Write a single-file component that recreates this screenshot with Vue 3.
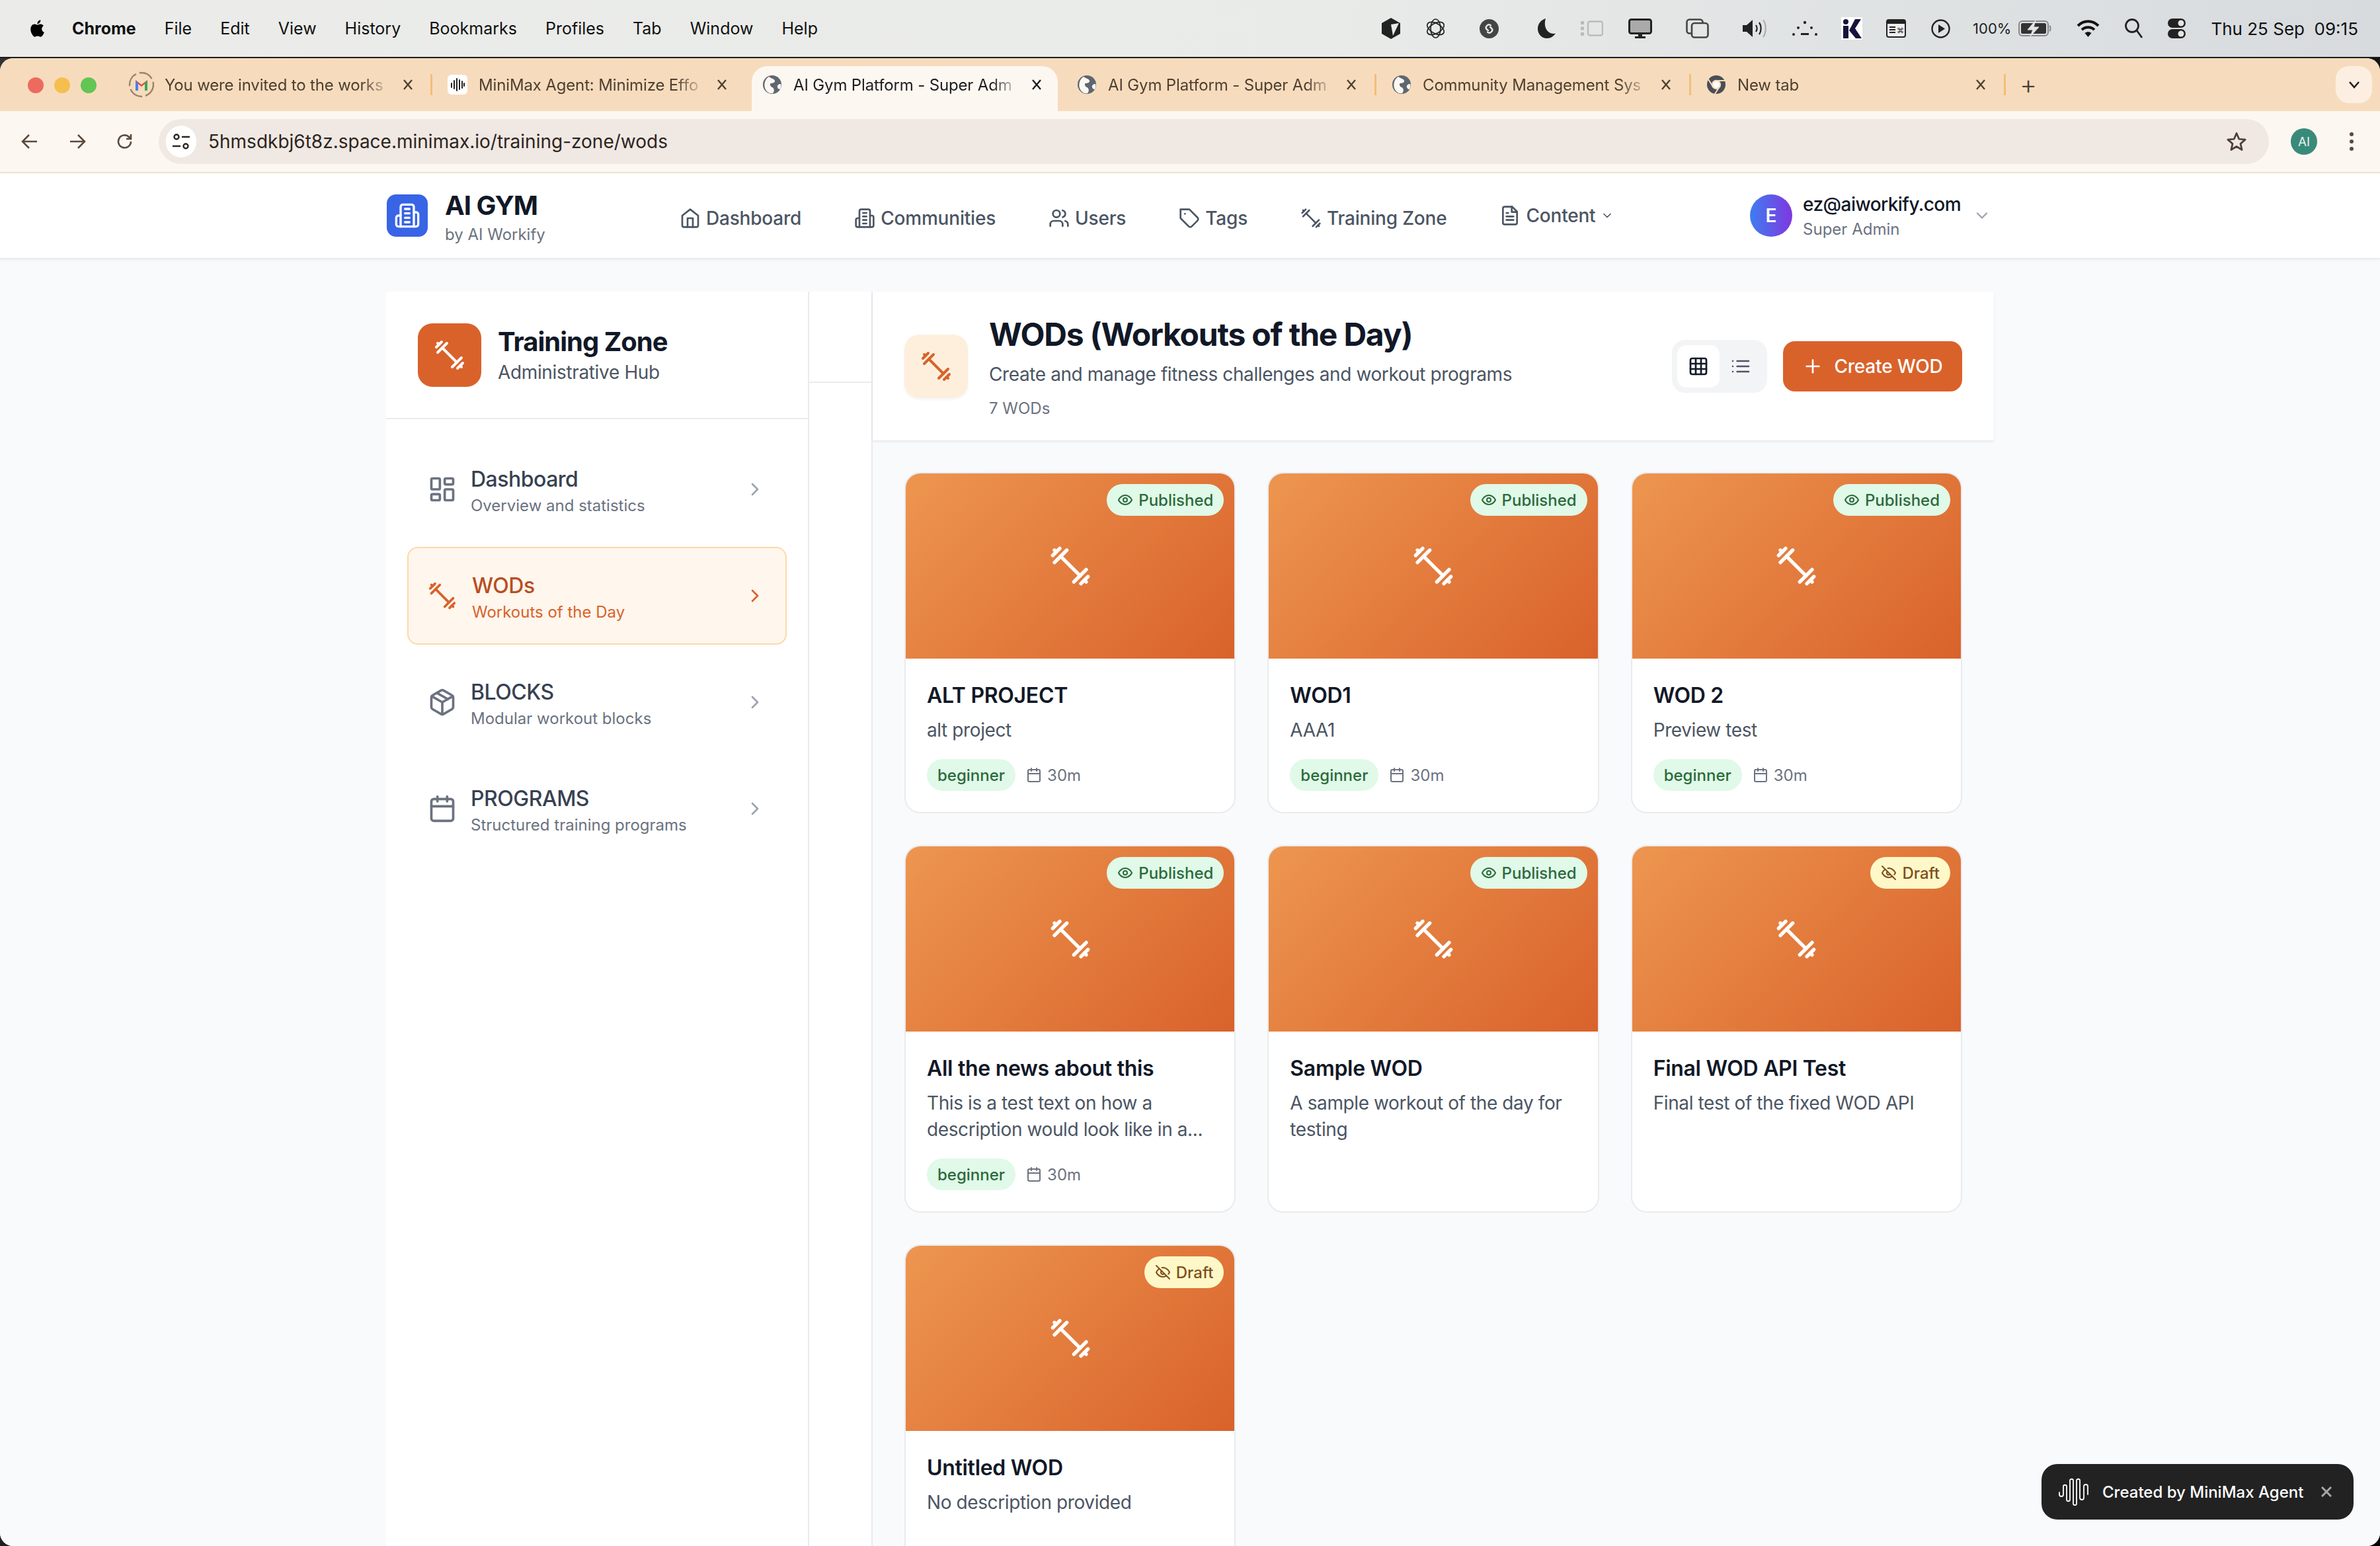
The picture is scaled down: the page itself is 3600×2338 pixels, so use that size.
<template>
  <div class="stage">
    <div class="menubar">
      <svg class="apple" viewBox="0 0 24 28"><path d="M19.6 14.8c0-3 2.4-4.4 2.5-4.5-1.4-2-3.5-2.3-4.2-2.3-1.8-.2-3.5 1-4.4 1-.9 0-2.3-1-3.8-1-2 0-3.8 1.100-4.800 2.900-2 3.600-.5 8.900 1.500 11.800 1 1.400 2.200 3 3.700 3 1.500-.1 2-1 3.800-1 1.800 0 2.300 1 3.800 1 1.600 0 2.600-1.400 3.600-2.900 1.100-1.600 1.600-3.200 1.600-3.300-.1 0-3.300-1.200-3.300-4.700zM16.700 5.900c.8-1 1.300-2.300 1.200-3.700-1.100.1-2.600.8-3.400 1.800-.7.9-1.400 2.300-1.200 3.600 1.300.1 2.600-.7 3.400-1.700z" fill="#000" /></svg>
      <span class="app-name">Chrome</span>
      <span v-for="m in menus" :key="m">{{ m }}</span>
      <div class="status">
        <svg class="st" width="28" height="32" viewBox="0 0 28 32"><path d="M14 0 28 8v16l-14 8-14-8V8z" fill="#222" /><path d="M14 10 26 8 17 27z" fill="#e8e9e8" /></svg>
        <svg class="st" width="31" height="32" viewBox="0 0 31 32" fill="none" stroke="#222" stroke-width="1.700"><ellipse cx="15.500" cy="16" rx="7.500" ry="14" /><ellipse cx="15.500" cy="16" rx="7.500" ry="14" transform="rotate(60 15.500 16)" /><ellipse cx="15.500" cy="16" rx="7.500" ry="14" transform="rotate(120 15.500 16)" /></svg>
        <svg class="st st-wide" width="29" height="29" viewBox="0 0 29 29"><circle cx="14.500" cy="14.500" r="14.500" fill="#444" /><path d="M17 9.500c-2-2-4.500-1-6 .5-2 2-1.500 4 0 5.500l2 1.500M12 19.500c2 2 4.500 1 6-.5 2-2 1.500-4 0-5.500l-2-1.500" fill="none" stroke="#e8e9e8" stroke-width="2.400" stroke-linecap="round" /></svg>
        <svg class="st st-wider" width="27" height="30" viewBox="0 0 27 30"><path d="M12 0C5 2 0 8 0 15.500 0 24 6.500 30 14 30c5.500 0 10-3 13-7.500C17 25 7.500 15 12 0z" fill="#222" /></svg>
        <svg class="st" width="34" height="24" viewBox="0 0 34 24"><rect x="11" y="1.500" width="22" height="21" rx="3" fill="none" stroke="#bbb" stroke-width="2.400" /><rect y="1" width="5" height="5" fill="#bbb" /><rect y="9.500" width="5" height="5" fill="#bbb" /><rect y="18" width="5" height="5" fill="#bbb" /></svg>
        <svg class="st" width="36" height="30" viewBox="0 0 36 30"><rect x="1.500" y="1.500" width="33" height="21" rx="3" fill="#aaa" stroke="#222" stroke-width="3" /><path d="M15 24h6v3h5v3H10v-3h5z" fill="#222" /></svg>
        <svg class="st st-wide" width="35" height="30" viewBox="0 0 35 30" fill="none" stroke="#444" stroke-width="2.600"><rect x="1.500" y="1.500" width="24" height="21" rx="4" /><rect x="9" y="7" width="24.500" height="21.500" rx="4" fill="#e4e6e6" /></svg>
        <svg class="st st-wide" width="39" height="30" viewBox="0 0 39 30"><path d="M0 10h6l9-8v26l-9-8H0z" fill="#222" /><path d="M20 10c2 3 2 7 0 10M25 6c3.500 5 3.500 13 0 18" fill="none" stroke="#222" stroke-width="2.200" /><path d="M31 2c5 7 5 19 0 26" fill="none" stroke="#aaa" stroke-width="2" /></svg>
        <svg class="st st-tight" width="38" height="24" viewBox="0 0 38 24" fill="#222"><circle cx="19" cy="3" r="2.200" /><circle cx="9" cy="11" r="2" /><circle cx="29" cy="11" r="2" /><circle cx="2" cy="21" r="2" /><circle cx="36" cy="21" r="2" /><rect x="13" y="19" width="12" height="3" /></svg>
        <svg class="st st-tight" width="32" height="34" viewBox="0 0 32 34"><rect width="32" height="34" fill="#fff" /><circle cx="7" cy="7" r="4" fill="#14143c" /><path d="M3 13h8v19H3zM12 20 21 3h9l-9 14 10 15h-9z" fill="#14143c" /></svg>
        <svg class="st st-tight" width="30" height="28" viewBox="0 0 30 28"><rect x="1" y="1" width="28" height="26" rx="3" fill="#eee" stroke="#222" stroke-width="2" /><rect x="1" y="1" width="28" height="6" fill="#222" /><path d="M5 12h9M5 16h9M5 20h9" stroke="#222" stroke-width="2" /><text x="16" y="21" font-size="11" fill="#222">⌘</text></svg>
        <svg class="st" width="29" height="29" viewBox="0 0 29 29"><circle cx="14.500" cy="14.500" r="13" fill="none" stroke="#222" stroke-width="2.400" /><path d="M11 8 21 14.500 11 21z" fill="#222" /></svg>
        <span class="st pct">100%</span>
        <svg class="st st-mini" width="50" height="24" viewBox="0 0 50 24"><rect x="1" y="1" width="44" height="22" rx="5" fill="none" stroke="#888" stroke-width="2" /><rect x="4" y="4" width="38" height="16" rx="2.500" fill="#333" /><path d="M47 8c2 1 2 7 0 8" stroke="#888" stroke-width="2" fill="none" /><path d="M26 0 14 14h8l-4 10 13-14h-8z" fill="#e4e6e6" stroke="#e4e6e6" /></svg>
        <svg class="st" width="35" height="26" viewBox="0 0 35 26" fill="none" stroke="#111" stroke-width="4"><path d="M2 9c9-9 22-9 31 0M8 15c5.500-5 13.500-5 19 0" /><path d="M17.500 26l-5-6c3-2.500 7-2.500 10 0z" fill="#111" stroke="none" /></svg>
        <svg class="st" width="27" height="30" viewBox="0 0 27 30" fill="none" stroke="#222" stroke-width="2.800"><circle cx="11" cy="11" r="9.500" /><path d="M18 18l8 11" /></svg>
        <svg class="st" width="27" height="30" viewBox="0 0 27 30"><rect width="27" height="14" rx="7" fill="#222" /><circle cx="20" cy="7" r="4.500" fill="#e4e6e6" /><rect y="16" width="27" height="14" rx="7" fill="#222" /><circle cx="20" cy="23" r="4.500" fill="#e4e6e6" /></svg>
        <span class="st date">Thu 25 Sep&nbsp; 09:15</span>
      </div>
    </div>

    <div class="window">
      <div class="tabstrip">
        <div class="lights"><i class="red"></i><i class="yellow"></i><i class="green"></i></div>
        <div v-for="t in tabs" :key="t.title + t.icon" class="tab" :class="{ active: t.active, sep: t.sep }">
          <svg v-if="t.icon === 'gmail'" class="favicon gmail" viewBox="0 0 40 40">
            <circle cx="20" cy="20" r="18" fill="none" stroke="#9a8468" stroke-width="2.400" stroke-dasharray="22 5" />
            <path d="M11 29V13l9 7 9-7v16h-4V19l-5 4-5-4v10z" fill="#e2483a" />
            <path d="M11 29V14l4 3v12z" fill="#4a80e8" /><path d="M29 29V14l-4 3v12z" fill="#3aa757" />
          </svg>
          <svg v-else-if="t.icon === 'minimax'" class="favicon" viewBox="0 0 30 30">
            <rect width="30" height="30" rx="6" fill="#fff" />
            <path d="M6 13v6M10 9v12M14 6v18M18 8v14M22 10v10M25 13v4" stroke="#222" stroke-width="2" stroke-linecap="round" />
          </svg>
          <svg v-else-if="t.icon === 'chrome'" class="favicon" viewBox="0 0 30 30">
            <circle cx="15" cy="15" r="14" fill="#4a4f55" /><circle cx="15" cy="15" r="6" fill="#fff" stroke="#f6dcbd" stroke-width="2.400" />
            <path d="M15 9h13M10 18 3 7M20 18l-7 11" stroke="#f6dcbd" stroke-width="2" />
          </svg>
          <svg v-else class="favicon" viewBox="0 0 30 30">
            <circle cx="15" cy="15" r="14" fill="#5f6670" />
            <path d="M10 3c4 3 8 3 9 6s-4 4-6 4-1 5 2 6 4 6 1 9c-5 1-10-2-12-8C2 13 5 6 10 3zM28 14c-3 0-6 2-5 5s3 3 4 3c1-2 2-5 1-8z" fill="#fdf7f2" />
          </svg>
          <span class="tab-title">{{ t.title }}</span>
          <svg class="tab-x" viewBox="0 0 24 24"><path d="M6 5l12 14M18 5 6 19" fill="none" stroke="currentColor" stroke-width="2.400" /></svg>
        </div>
        <span class="plus">+</span>
        <div class="tab-menu">
          <svg width="18" height="12" viewBox="0 0 18 12"><path d="M2 2l7 8 7-8" fill="none" stroke="#222" stroke-width="2.600" /></svg>
        </div>
      </div>

      <div class="toolbar">
        <svg class="tb" viewBox="0 0 28 28"><path d="M25 14H4M13 4 3 14l10 10" fill="none" stroke="#5b4a3c" stroke-width="2.600" /></svg>
        <svg class="tb" viewBox="0 0 28 28"><path d="M3 14h21M15 4l10 10-10 10" fill="none" stroke="#5b4a3c" stroke-width="2.600" /></svg>
        <svg class="tb" viewBox="0 0 28 28"><path d="M23 14a9.500 9.500 0 1 1-3-7l3 3M23 3v7h-7" fill="none" stroke="#5b4a3c" stroke-width="2.600" /></svg>
        <div class="urlbar">
          <div class="site">
            <svg width="26" height="26" viewBox="0 0 26 26" fill="none" stroke="#2b2520" stroke-width="2.400"><circle cx="6" cy="6" r="3.500" /><path d="M14 6h12M0 20h12" /><circle cx="20" cy="20" r="3.500" /></svg>
          </div>
          <span class="url">5hmsdkbj6t8z.space.minimax.io/training-zone/wods</span>
          <svg class="star" width="30" height="30" viewBox="0 0 24 24"><path d="m12 2 3 7 7.500.700-5.700 5 1.700 7.300L12 18l-6.500 4 1.700-7.300-5.700-5L9 9z" fill="none" stroke="#4e4036" stroke-width="2.200" stroke-linejoin="round" /></svg>
        </div>
        <span class="profile">AI</span>
        <svg class="kebab" width="10" height="30" viewBox="0 0 10 30" fill="#5b4a3c"><circle cx="5" cy="4" r="3" /><circle cx="5" cy="15" r="3" /><circle cx="5" cy="26" r="3" /></svg>
      </div>

      <div class="page">
        <header class="topbar">
          <div class="container topbar-in">
            <div class="brand">
              <div class="brand-icon"><Icon name="building" class="i-40" stroke="#fff" /></div>
              <div>
                <div class="brand-name">AI GYM</div>
                <div class="brand-sub">by AI Workify</div>
              </div>
            </div>
            <nav class="mainnav">
              <a v-for="n in navLinks" :key="n.label" class="navlink">
                <Icon :name="n.icon" class="i-32" /> {{ n.label }}
              </a>
              <a class="navlink content-link">
                <Icon name="file" class="i-32" /> Content
                <Icon name="down" class="i-20" />
              </a>
            </nav>
            <div class="user">
              <div class="avatar">E</div>
              <div class="user-text">
                <div class="email">ez@aiworkify.com</div>
                <div class="role">Super Admin</div>
              </div>
              <Icon name="down" class="i-28 user-chev" />
            </div>
          </div>
        </header>

        <div class="container body">
          <aside class="sidebar">
            <div class="side-head">
              <div class="side-icon"><Icon name="barbell" class="i-48" stroke="#fff" /></div>
              <div>
                <div class="side-title">Training Zone</div>
                <div class="side-sub">Administrative Hub</div>
              </div>
            </div>
            <div class="side-list">
              <div v-for="s in sideItems" :key="s.title" class="side-item" :class="{ on: s.on }">
                <Icon :name="s.icon" class="i-44 side-ic" />
                <div class="side-text">
                  <div class="si-title">{{ s.title }}</div>
                  <div class="si-sub">{{ s.sub }}</div>
                </div>
                <Icon name="right" class="i-32 side-chev" />
              </div>
            </div>
          </aside>

          <div class="spacer"><div class="spacer-top"></div></div>

          <main class="main">
            <div class="main-head">
              <div class="mh-icon"><Icon name="barbell" class="i-48" /></div>
              <div class="mh-text">
                <h1>WODs (Workouts of the Day)</h1>
                <p class="mh-desc">Create and manage fitness challenges and workout programs</p>
                <p class="mh-count">7 WODs</p>
              </div>
              <div class="toggle">
                <span class="tg on"><Icon name="grid" class="i-32" /></span>
                <span class="tg"><Icon name="list" class="i-32" /></span>
              </div>
              <button class="create"><Icon name="plus" class="i-32" /> Create WOD</button>
            </div>

            <div class="grid">
              <article v-for="w in wods" :key="w.title" class="card">
                <div class="thumb">
                  <Icon name="barbell" class="i-64" stroke="#fff" />
                  <span class="badge" :class="{ draft: !w.published }">
                    <Icon :name="w.published ? 'eye' : 'eyeoff'" class="i-24" />
                    {{ w.published ? "Published" : "Draft" }}
                  </span>
                </div>
                <div class="card-body">
                  <h3>{{ w.title }}</h3>
                  <p class="card-desc">{{ w.desc }}</p>
                  <div v-if="w.meta" class="meta">
                    <span class="level">beginner</span>
                    <span class="time"><Icon name="calendar" class="i-24" /> 30m</span>
                  </div>
                </div>
              </article>
            </div>
          </main>
        </div>

        <div class="toast">
          <svg width="50" height="42" viewBox="0 0 50 42" fill="none" stroke="#fff" stroke-width="1.800" stroke-linecap="round">
            <path d="M1 22v3c0 4 6 4 6 0V13c0-3 5-3 5 0v20c0 3 5 3 5 0V4c0-3 5-3 5 0v35c0 3 5 3 5 0V4c0-3 5-3 5 0v26c0 4 6 4 6 0V13c0-4 6-4 6 0v12" />
          </svg>
          <span>Created by MiniMax Agent</span>
          <svg class="toast-x" width="16" height="16" viewBox="0 0 16 16"><path d="M1 1l14 14M15 1 1 15" stroke="#a8a8a8" stroke-width="3" /></svg>
        </div>
      </div>
    </div>
  </div>
</template>

<script setup>
import { h } from "vue";

// lucide-style outlines, rects and circles written as paths
const icons = {
  home: ["m3 9 9-7 9 7v11a2 2 0 0 1-2 2H5a2 2 0 0 1-2-2z", "M9 22V12h6v10"],
  building: [
    "M6 22V4a2 2 0 0 1 2-2h8a2 2 0 0 1 2 2v18Z",
    "M6 12H4a2 2 0 0 0-2 2v6a2 2 0 0 0 2 2h2",
    "M18 9h2a2 2 0 0 1 2 2v9a2 2 0 0 1-2 2h-2",
    "M10 6h4",
    "M10 10h4",
    "M10 14h4",
    "M10 18h4",
  ],
  users: [
    "M16 21v-2a4 4 0 0 0-4-4H6a4 4 0 0 0-4 4v2",
    "M9 3a4 4 0 1 0 0 8 4 4 0 0 0 0-8z",
    "M22 21v-2a4 4 0 0 0-3-3.870",
    "M16 3.130a4 4 0 0 1 0 7.750",
  ],
  tag: [
    "M12 2H2v10l9.290 9.290c.94.94 2.480.94 3.420 0l6.580-6.580c.94-.94.94-2.480 0-3.420L12 2Z",
    "M7 7h.01",
  ],
  barbell: ["m6.500 6.500 11 11", "m21 21-1-1", "m3 3 1 1", "m18 22 4-4", "m2 6 4-4", "m3 10 7-7", "m14 21 7-7"],
  file: [
    "M14.500 2H6a2 2 0 0 0-2 2v16a2 2 0 0 0 2 2h12a2 2 0 0 0 2-2V7.500L14.500 2z",
    "M14 2v6h6",
    "M16 13H8",
    "M16 17H8",
    "M10 9H8",
  ],
  down: ["m6 9 6 6 6-6"],
  right: ["m9 18 6-6-6-6"],
  dashboard: [
    "M4 3h5a1 1 0 0 1 1 1v7a1 1 0 0 1-1 1H4a1 1 0 0 1-1-1V4a1 1 0 0 1 1-1z",
    "M15 3h5a1 1 0 0 1 1 1v3a1 1 0 0 1-1 1h-5a1 1 0 0 1-1-1V4a1 1 0 0 1 1-1z",
    "M15 12h5a1 1 0 0 1 1 1v7a1 1 0 0 1-1 1h-5a1 1 0 0 1-1-1v-7a1 1 0 0 1 1-1z",
    "M4 16h5a1 1 0 0 1 1 1v3a1 1 0 0 1-1 1H4a1 1 0 0 1-1-1v-3a1 1 0 0 1 1-1z",
  ],
  box: [
    "m7.500 4.270 9 5.150",
    "M21 8a2 2 0 0 0-1-1.730l-7-4a2 2 0 0 0-2 0l-7 4A2 2 0 0 0 3 8v8a2 2 0 0 0 1 1.730l7 4a2 2 0 0 0 2 0l7-4A2 2 0 0 0 21 16Z",
    "m3.300 7 8.700 5 8.700-5",
    "M12 22V12",
  ],
  calendar: [
    "M5 4h14a2 2 0 0 1 2 2v14a2 2 0 0 1-2 2H5a2 2 0 0 1-2-2V6a2 2 0 0 1 2-2z",
    "M16 2v4",
    "M8 2v4",
    "M3 10h18",
  ],
  grid: [
    "M5 3h14a2 2 0 0 1 2 2v14a2 2 0 0 1-2 2H5a2 2 0 0 1-2-2V5a2 2 0 0 1 2-2z",
    "M3 9h18",
    "M3 15h18",
    "M9 3v18",
    "M15 3v18",
  ],
  list: ["M8 6h13", "M8 12h13", "M8 18h13", "M3 6h.01", "M3 12h.01", "M3 18h.01"],
  plus: ["M5 12h14", "M12 5v14"],
  eye: [
    "M2 12s3-7 10-7 10 7 10 7-3 7-10 7-10-7-10-7Z",
    "M12 9a3 3 0 1 0 0 6 3 3 0 0 0 0-6z",
  ],
  eyeoff: [
    "M9.880 9.880a3 3 0 1 0 4.240 4.240",
    "M10.730 5.080A10.430 10.430 0 0 1 12 5c7 0 10 7 10 7a13.160 13.160 0 0 1-1.670 2.680",
    "M6.610 6.610A13.526 13.526 0 0 0 2 12s3 7 10 7a9.740 9.740 0 0 0 5.390-1.610",
    "m2 2 20 20",
  ],
};

const Icon = (props) =>
  h(
    "svg",
    {
      viewBox: "0 0 24 24",
      fill: "none",
      stroke: props.stroke || "currentColor",
      "stroke-width": 2,
      "stroke-linecap": "round",
      "stroke-linejoin": "round",
    },
    icons[props.name].map((d) => h("path", { d }))
  );
Icon.props = ["name", "stroke"];

const menus = ["File", "Edit", "View", "History", "Bookmarks", "Profiles", "Tab", "Window", "Help"];

const tabs = [
  { title: "You were invited to the works", icon: "gmail", sep: true },
  { title: "MiniMax Agent: Minimize Effo", icon: "minimax" },
  { title: "AI Gym Platform - Super Adm", icon: "globe", active: true },
  { title: "AI Gym Platform - Super Adm", icon: "globe2", sep: true },
  { title: "Community Management Sys", icon: "globe", sep: true },
  { title: "New tab", icon: "chrome", sep: true },
];

const navLinks = [
  { label: "Dashboard", icon: "home" },
  { label: "Communities", icon: "building" },
  { label: "Users", icon: "users" },
  { label: "Tags", icon: "tag" },
  { label: "Training Zone", icon: "barbell" },
];

const sideItems = [
  { title: "Dashboard", sub: "Overview and statistics", icon: "dashboard" },
  { title: "WODs", sub: "Workouts of the Day", icon: "barbell", on: true },
  { title: "BLOCKS", sub: "Modular workout blocks", icon: "box" },
  { title: "PROGRAMS", sub: "Structured training programs", icon: "calendar" },
];

const wods = [
  { title: "ALT PROJECT", desc: "alt project", published: true, meta: true },
  { title: "WOD1", desc: "AAA1", published: true, meta: true },
  { title: "WOD 2", desc: "Preview test", published: true, meta: true },
  {
    title: "All the news about this",
    desc: "This is a test text on how a description would look like in a...",
    published: true,
    meta: true,
  },
  { title: "Sample WOD", desc: "A sample workout of the day for testing", published: true },
  { title: "Final WOD API Test", desc: "Final test of the fixed WOD API", published: false },
  { title: "Untitled WOD", desc: "No description provided", published: false },
];
</script>

<style>
html,
body {
  margin: 0;
  background: #2b3440;
}
</style>

<style scoped>
.stage {
  width: 3600px;
  height: 2338px;
  display: flex;
  flex-direction: column;
  overflow: hidden;
  font-family: Inter, "Liberation Sans", sans-serif;
  position: relative;
  background: linear-gradient(135deg, #333 0%, #000 100%);
}

/* mac menu bar */
.menubar {
  height: 86px;
  flex: none;
  border-bottom: 2px solid #1c1c1c;
  background: linear-gradient(90deg, #ebecea 0%, #e9ebe9 55%, #d7dbde 100%);
  display: flex;
  align-items: center;
  padding-left: 42px;
  gap: 43px;
  font-size: 25px;
  color: #111;
}
.apple {
  width: 26px;
  height: 32px;
  margin-right: -2px;
}
.app-name {
  font-weight: 700;
}
.status {
  margin-left: auto;
  display: flex;
  align-items: center;
  padding-right: 33px;
}
.st {
  margin-left: 38px;
  flex: none;
}
.st-wide {
  margin-left: 51px;
}
.st-wider {
  margin-left: 59px;
}
.st-tight {
  margin-left: 36px;
}
.st-mini {
  margin-left: 11px;
}
.pct {
  margin-left: 34px;
  font-size: 22px;
  color: #222;
}
.date {
  font-size: 26px;
}

.window {
  flex: 1;
  min-height: 0;
  display: flex;
  flex-direction: column;
  border-radius: 20px;
  overflow: hidden;
  background: #f9fafb;
}

/* chrome */
.tabstrip {
  height: 80px;
  flex: none;
  background: #f6dcbd;
  display: flex;
  align-items: flex-start;
  padding-top: 12px;
  box-sizing: border-box;
  padding-left: 42px;
  position: relative;
  color: #4e3f31;
}
.lights {
  width: 143px;
  flex: none;
  display: flex;
  gap: 16px;
  padding-top: 17px;
}
.lights i {
  width: 24px;
  height: 24px;
  border-radius: 50%;
}
.red {
  background: #ed6a5e;
}
.yellow {
  background: #f5bf4f;
}
.green {
  background: #62c554;
}
.tab {
  width: 476px;
  height: 68px;
  flex: none;
  box-sizing: border-box;
  padding: 0 0 12px 16px;
  display: flex;
  align-items: center;
  position: relative;
  font-size: 24px;
}
.tab.active {
  width: 463px;
  margin-right: 13px;
  background: #fdf7f2;
  border-radius: 24px 24px 0 0;
  color: #1d1d1d;
}
.tab.sep::after {
  content: "";
  position: absolute;
  right: 7px;
  top: 12px;
  width: 3px;
  height: 32px;
  background: #f4bd78;
}
.favicon {
  width: 30px;
  height: 30px;
  flex: none;
}
.gmail {
  width: 40px;
  height: 40px;
  margin: 0 -2px 0 -7px;
}
.tab-title {
  width: 332px;
  margin-left: 17px;
  flex: none;
  white-space: nowrap;
  overflow: hidden;
  letter-spacing: -0.15px;
  -webkit-mask-image: linear-gradient(90deg, #000 90%, rgba(0, 0, 0, 0.25) 100%);
  mask-image: linear-gradient(90deg, #000 90%, rgba(0, 0, 0, 0.25) 100%);
}
.tab-x {
  width: 24px;
  height: 24px;
  margin-left: 24px;
  flex: none;
}
.plus {
  font-size: 40px;
  font-weight: 300;
  line-height: 56px;
  margin-left: 14px;
}
.tab-menu {
  position: absolute;
  right: 12px;
  top: 12px;
  width: 55px;
  height: 56px;
  border-radius: 20px;
  background: #fcefe2;
  display: flex;
  align-items: center;
  justify-content: center;
}
.toolbar {
  height: 92px;
  flex: none;
  box-sizing: content-box;
  border-bottom: 2px solid #efe0d3;
  background: #fdf7f2;
  display: flex;
  align-items: center;
  padding-left: 31px;
  gap: 44px;
}
.tb {
  width: 28px;
  height: 28px;
}
.urlbar {
  width: 3192px;
  height: 68px;
  margin-left: -7px;
  flex: none;
  border-radius: 34px;
  background: #f0e8e3;
  display: flex;
  align-items: center;
  padding: 0 34px 0 11px;
  box-sizing: border-box;
}
.site {
  width: 46px;
  height: 48px;
  border-radius: 24px;
  background: #fff;
  display: flex;
  align-items: center;
  justify-content: center;
}
.url {
  margin-left: 18px;
  font-size: 28px;
  color: #2b2520;
}
.star {
  margin-left: auto;
}
.profile {
  width: 40px;
  height: 40px;
  margin-left: -11px;
  border-radius: 50%;
  background: #3a8a7a;
  color: #e4f3ee;
  font-size: 19px;
  display: flex;
  align-items: center;
  justify-content: center;
  flex: none;
}
.kebab {
  margin-left: 3px;
}

/* page */
.page {
  flex: 1;
  min-height: 0;
  position: relative;
  overflow: hidden;
  background: #f9fafb;
}
.container {
  width: 2432px;
  margin: 0 auto;
}
.topbar {
  height: 128px;
  background: #fff;
  border-bottom: 2px solid #e9ebee;
  box-shadow: 0 2px 4px rgba(0, 0, 0, 0.04);
}
.topbar-in {
  height: 100%;
  display: flex;
  align-items: center;
}
.brand {
  display: flex;
  align-items: center;
  gap: 26px;
  padding-left: 1px;
  width: 443px;
  flex: none;
}
.brand-icon {
  width: 62px;
  height: 64px;
  border-radius: 14px;
  background: #3864e6;
  display: flex;
  align-items: center;
  justify-content: center;
}
.brand-name {
  font-size: 40px;
  font-weight: 700;
  line-height: 56px;
  padding-top: 2px;
  letter-spacing: -1px;
  color: #111827;
}
.brand-sub {
  font-size: 24px;
  line-height: 32px;
  color: #6b7280;
}
.mainnav {
  display: flex;
  align-items: center;
  gap: 80px;
}
.navlink {
  display: flex;
  align-items: center;
  gap: 8px;
  font-size: 28px;
  font-weight: 500;
  letter-spacing: -0.2px;
  color: #4b5563;
  padding-top: 8px;
  white-space: nowrap;
}
.content-link {
  padding-top: 0;
  padding-bottom: 0;
}
.user {
  margin-left: auto;
  display: flex;
  align-items: center;
  padding-right: 4px;
}
.avatar {
  width: 64px;
  height: 64px;
  border-radius: 50%;
  background: linear-gradient(90deg, #3f7df0, #8037e0);
  color: #fff;
  font-size: 28px;
  font-weight: 600;
  display: flex;
  align-items: center;
  justify-content: center;
}
.user-text {
  margin-left: 16px;
}
.email {
  font-size: 28px;
  font-weight: 500;
  line-height: 40px;
  letter-spacing: -0.55px;
  color: #111827;
}
.role {
  font-size: 24px;
  line-height: 32px;
  padding-top: 2px;
  color: #6b7280;
}
.user-chev {
  color: #9ca3af;
  margin-left: 18px;
}
.i-20 {
  width: 20px;
  height: 20px;
}
.i-24 {
  width: 24px;
  height: 24px;
  flex: none;
}
.i-28 {
  width: 28px;
  height: 28px;
}
.i-32 {
  width: 32px;
  height: 32px;
  flex: none;
}
.i-40 {
  width: 40px;
  height: 40px;
}
.i-44 {
  width: 44px;
  height: 44px;
  flex: none;
}
.i-48 {
  width: 48px;
  height: 48px;
}
.i-64 {
  width: 64px;
  height: 64px;
}

.body {
  display: flex;
  align-items: stretch;
  padding-top: 49px;
  height: 2100px;
  box-sizing: border-box;
}
.sidebar {
  width: 640px;
  flex: none;
  box-sizing: border-box;
  background: #fff;
  border-right: 2px solid #e9ebee;
}
.side-head {
  height: 193px;
  box-sizing: border-box;
  border-bottom: 2px solid #e9ebee;
  display: flex;
  align-items: center;
  gap: 25px;
  padding: 0 48px;
}
.side-icon {
  width: 96px;
  height: 96px;
  border-radius: 22px;
  background: #d9622b;
  display: flex;
  align-items: center;
  justify-content: center;
}
.side-title {
  font-size: 40px;
  font-weight: 700;
  line-height: 52px;
  letter-spacing: -1px;
  color: #111827;
}
.side-sub {
  font-size: 28px;
  line-height: 40px;
  letter-spacing: -0.35px;
  color: #4b5563;
}
.side-list {
  padding: 32px;
  display: flex;
  flex-direction: column;
  gap: 13px;
}
.side-item {
  height: 148px;
  box-sizing: border-box;
  border: 2px solid transparent;
  border-radius: 16px;
  display: flex;
  align-items: center;
  padding: 0 30px 0 29px;
  color: #6b7280;
}
.side-item.on {
  background: #fff6ed;
  border-color: #fbd9aa;
  color: #d9622b;
}
.side-ic {
  margin-right: 21px;
}
.si-title {
  font-size: 32px;
  font-weight: 500;
  line-height: 48px;
  letter-spacing: -0.5px;
  color: #374151;
}
.si-sub {
  font-size: 24px;
  line-height: 32px;
  color: #6b7280;
}
.on .si-title {
  color: #b84e1f;
}
.on .si-sub {
  color: #d9622b;
}
.side-text {
  flex: 1;
  padding-top: 2px;
}
.on .side-text {
  padding-left: 2px;
}
.side-chev {
  color: #9ca3af;
}
.on .side-chev {
  color: #d9622b;
}
.spacer {
  width: 96px;
  flex: none;
  box-sizing: border-box;
  background: #fff;
  border-right: 2px solid #e9ebee;
}
.spacer-top {
  height: 136px;
  border-bottom: 2px solid #e9ebee;
}
.main {
  flex: 1;
  min-width: 0;
}
.main-head {
  height: 225px;
  box-sizing: border-box;
  padding: 0 48px;
  background: #fff;
  box-shadow: 0 2px 3px rgba(0, 0, 0, 0.08);
  display: flex;
  align-items: center;
}
.mh-icon {
  width: 96px;
  height: 96px;
  border-radius: 22px;
  background: #feefdd;
  color: #d9622b;
  box-shadow: 0 2px 4px rgba(0, 0, 0, 0.05);
  display: flex;
  align-items: center;
  justify-content: center;
}
.mh-text {
  margin-left: 32px;
  flex: 1;
}
h1 {
  margin: 0;
  font-size: 48px;
  font-weight: 700;
  line-height: 64px;
  letter-spacing: -1.2px;
  color: #111827;
}
.mh-desc {
  margin: 8px 0 0;
  font-size: 28px;
  line-height: 40px;
  letter-spacing: -0.4px;
  color: #4b5563;
}
.mh-count {
  margin: 16px 0 0;
  font-size: 24px;
  line-height: 32px;
  color: #6b7280;
}
.toggle {
  display: flex;
  padding: 8px;
  border-radius: 20px;
  background: #f3f4f6;
  margin-right: 24px;
}
.tg {
  width: 64px;
  height: 64px;
  border-radius: 14px;
  display: flex;
  align-items: center;
  justify-content: center;
  color: #4b5563;
}
.tg.on {
  background: #fff;
  color: #111827;
}
.create {
  height: 76px;
  width: 271px;
  box-sizing: border-box;
  border: none;
  border-radius: 18px;
  background: #d9622b;
  color: #fff;
  font-family: inherit;
  font-size: 28px;
  font-weight: 500;
  letter-spacing: -0.2px;
  display: flex;
  align-items: center;
  justify-content: center;
  gap: 16px;
}
.grid {
  display: grid;
  grid-template-columns: repeat(3, 1fr);
  gap: 48px;
  padding: 48px;
}
.card {
  background: #fff;
  border: 2px solid #e9ebee;
  border-radius: 24px;
  overflow: hidden;
}
.card:last-child {
  min-height: 540px;
}
.thumb {
  height: 280px;
  position: relative;
  background: linear-gradient(135deg, #ed9650, #d9622b);
  display: flex;
  align-items: center;
  justify-content: center;
}
.badge {
  position: absolute;
  top: 16px;
  right: 16px;
  height: 48px;
  padding: 0 16px;
  border-radius: 24px;
  background: #e0f9e8;
  color: #2c6a3c;
  font-size: 24px;
  font-weight: 500;
  display: flex;
  align-items: center;
  gap: 8px;
}
.badge.draft {
  background: #fef8c8;
  color: #7f4f1c;
}
.card-body {
  padding: 32px;
}
h3 {
  margin: 0;
  font-size: 32px;
  font-weight: 600;
  line-height: 48px;
  letter-spacing: -0.3px;
  color: #111827;
}
.card-desc {
  margin: 8px 0 0;
  font-size: 28px;
  line-height: 40px;
  letter-spacing: -0.4px;
  color: #4b5563;
}
.meta {
  margin-top: 24px;
  display: flex;
  align-items: center;
  gap: 16px;
}
.level {
  height: 48px;
  padding: 0 16px;
  border-radius: 24px;
  background: #e0f9e8;
  color: #2c6a3c;
  font-size: 24px;
  font-weight: 500;
  display: flex;
  align-items: center;
}
.time {
  display: flex;
  align-items: center;
  gap: 8px;
  font-size: 24px;
  color: #6b7280;
}
.toast {
  position: absolute;
  right: 40px;
  bottom: 40px;
  width: 472px;
  height: 84px;
  box-sizing: border-box;
  border-radius: 24px;
  background: #222;
  color: #fff;
  font-size: 24px;
  font-weight: 500;
  display: flex;
  align-items: center;
  padding-left: 26px;
  gap: 16px;
}
.toast-x {
  margin-left: 11px;
}
</style>
